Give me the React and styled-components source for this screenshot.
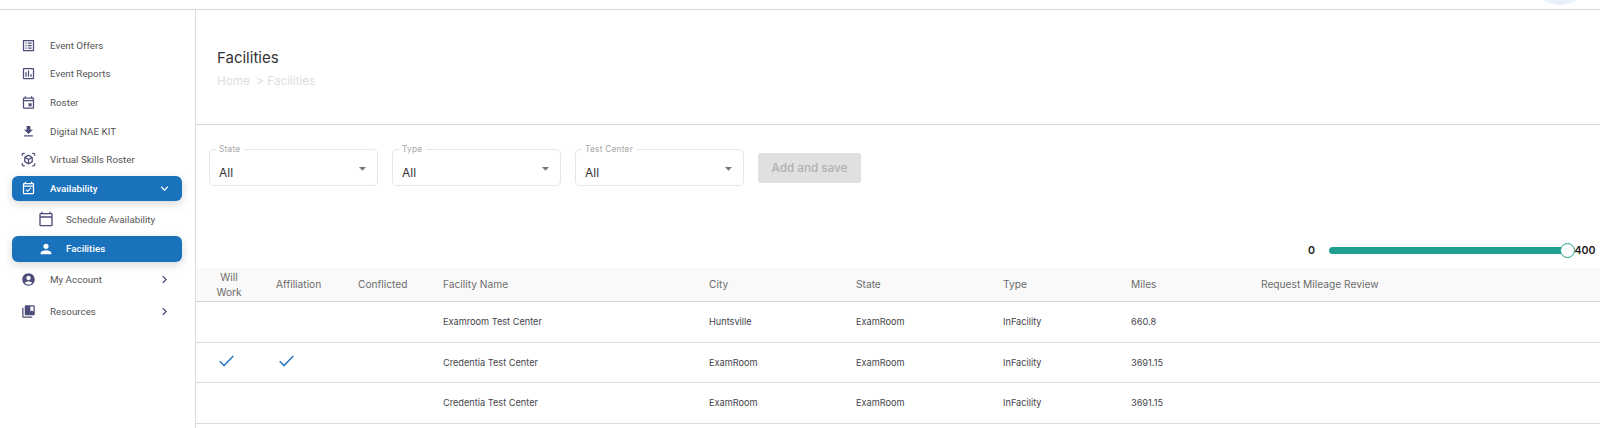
import React from "react";
import styled, { createGlobalStyle } from "styled-components";
import {
  MdOutlineListAlt,
  MdOutlineAssessment,
  MdOutlineEvent,
  MdFileDownload,
  MdOutlineViewInAr,
  MdOutlineEventAvailable,
  MdOutlineCalendarToday,
  MdPerson,
  MdAccountCircle,
  MdCollectionsBookmark,
  MdChevronRight,
  MdExpandMore,
  MdArrowDropDown,
} from "react-icons/md";

const GlobalStyle = createGlobalStyle`
  html, body {
    margin: 0;
    padding: 0;
    background: #fff;
    overflow: hidden;
  }
  * { box-sizing: border-box; }
`;

const Page = styled.div`
  width: 1600px;
  height: 428px;
  display: flex;
  flex-direction: column;
  overflow: hidden;
  font-family: Inter, "Liberation Sans", sans-serif;
`;

const TopBar = styled.header`
  flex: 0 0 10px;
  display: flex;
  justify-content: flex-end;
  overflow: hidden;
  border-bottom: 1px solid #d4d4d4;
  padding-right: 12px;
`;

const Avatar = styled.div`
  flex: none;
  width: 56px;
  height: 56px;
  margin-top: -51px;
  border-radius: 50%;
  background: #e8f1fa;
`;

const Body = styled.div`
  flex: 1;
  display: flex;
  min-height: 0;
`;

const Sidebar = styled.nav`
  flex: 0 0 196px;
  border-right: 1px solid #dcdcdc;
  padding: 21px 13px 0 12px;
`;

const NavItem = styled.div`
  height: ${(p) => p.$h || 28.6}px;
  display: flex;
  align-items: center;
  padding-left: ${(p) => (p.$sub ? 26 : 9)}px;
  padding-right: 10.5px;
  border-radius: 6px;
  font-family: Roboto, sans-serif;
  font-size: 9.8px;
  font-weight: ${(p) => (p.$active ? 500 : 400)};
  color: ${(p) => (p.$active ? "#fff" : "#555")};
  background: ${(p) => (p.$active ? "#1b72bc" : "transparent")};
  box-shadow: ${(p) =>
    p.$active ? "0 3px 10px rgba(0,0,0,0.16)" : "none"};

  > svg:first-child {
    flex: none;
    font-size: ${(p) => (p.$sub ? 16 : 15)}px;
    color: ${(p) => (p.$active ? "#fff" : "#4d4d7a")};
    margin-right: ${(p) => (p.$sub ? 12 : 14)}px;
  }
`;

const NavLabel = styled.span`
  flex: 1;
  white-space: nowrap;
`;

const NavCaret = styled.span`
  display: flex;
  font-size: 15px;
  color: ${(p) => (p.$active ? "#fff" : "#4d4d7a")};
`;

const NavGroup = styled.div`
  margin-top: ${(p) => p.$mt || 0}px;
`;

const SubList = styled.div`
  margin-top: 6px;
  display: flex;
  flex-direction: column;
  gap: 4px;
`;

const Main = styled.main`
  flex: 1;
  min-width: 0;
  display: flex;
  flex-direction: column;
`;

const PageHead = styled.div`
  height: 115px;
  border-bottom: 1px solid #d9d5d5;
  padding: 39px 0 0 21px;
`;

const Title = styled.h1`
  margin: 0;
  font-size: 15px;
  line-height: 18px;
  font-weight: 400;
  color: #333;
`;

const Crumbs = styled.div`
  margin-top: 7px;
  font-size: 11.7px;
  line-height: 15px;
  color: #dedede;
  white-space: pre;
`;

const Filters = styled.div`
  display: flex;
  align-items: flex-start;
  padding: 19px 0 0 13px;
  gap: 14px;
  height: 113px;
`;

const Select = styled.fieldset`
  margin: 0;
  width: 169px;
  height: 41.5px;
  padding: 0 6.5px 0 9px;
  border: 1px solid #e6e6e6;
  border-radius: 5px;
  display: flex;
  align-items: flex-start;
  justify-content: space-between;
`;

const SelectLabel = styled.legend`
  margin-left: -3px;
  padding: 0 4px 0 3px;
  font-size: 8.4px;
  line-height: 10px;
  letter-spacing: 0.2px;
  color: #a8a8a8;
`;

const SelectValue = styled.span`
  margin-top: 11px;
  font-size: 12px;
  line-height: 15px;
  color: #333;
`;

const SelectCaret = styled(MdArrowDropDown)`
  margin-top: 6px;
  font-size: 17px;
  color: #777;
`;

const AddButton = styled.button`
  width: 103px;
  height: 30px;
  margin-top: 9px;
  border: none;
  border-radius: 3px;
  background: #e0e0e0;
  color: #b0b0b0;
  font-family: inherit;
  font-size: 11.7px;
  font-weight: 500;
`;

const SliderRow = styled.div`
  height: 24px;
  display: flex;
  align-items: center;
  padding-left: 1112px;
  font-size: 10.6px;
  font-weight: 600;
  color: #222;
`;

const SliderMin = styled.span`
  width: 20.5px;
`;

const SliderTrack = styled.div`
  width: 238px;
  height: 7px;
  border-radius: 4px;
  background: #1fa08e;
`;

const SliderThumb = styled.div`
  flex: none;
  width: 15px;
  height: 15px;
  margin: 0 0 0 -7px;
  border-radius: 50%;
  border: 1.5px solid #1fa08e;
  background: #fff;
`;

const Table = styled.table`
  width: 100%;
  margin-top: 6px;
  border-collapse: collapse;
  table-layout: fixed;
`;

const HeadRow = styled.tr`
  height: 33.5px;
  background: #f9f9f9;
`;

const Th = styled.th`
  padding: 0 ${(p) => (p.$center ? 9 : 0)}px 0 ${(p) => p.$pad ?? 0}px;
  text-align: ${(p) => (p.$center ? "center" : "left")};
  font-size: 10.2px;
  line-height: 15px;
  font-weight: 400;
  color: #6c6c6c;
  border-bottom: 1px solid #d2d2d2;
`;

const Tr = styled.tr`
  height: 40.5px;
`;

const Td = styled.td`
  padding: 0;
  font-size: 9.2px;
  color: #44444c;
  border-bottom: 1px solid #dcdcdc;
  white-space: nowrap;
`;

const CheckCell = styled(Td)`
  padding-left: ${(p) => p.$pad}px;
  padding-bottom: 2px;
  color: #2f7bc4;
  line-height: 0;
`;

const CheckMark = ({ on }) =>
  on ? (
    <svg width="15" height="12" viewBox="0 0 15 12" fill="none">
      <path d="M0.7 6.3 L5 10.6 L14.3 1" stroke="currentColor" strokeWidth="1.6" />
    </svg>
  ) : null;

const columns = [
  { label: "Will Work", width: 75, center: true },
  { label: "Affiliation", width: 82, pad: 5 },
  { label: "Conflicted", width: 90, pad: 5 },
  { label: "Facility Name", width: 266 },
  { label: "City", width: 147 },
  { label: "State", width: 147 },
  { label: "Type", width: 128 },
  { label: "Miles", width: 130 },
  { label: "Request Mileage Review" },
];

const rows = [
  { name: "Examroom Test Center", city: "Huntsville", state: "ExamRoom", type: "InFacility", miles: "660.8" },
  { name: "Credentia Test Center", city: "ExamRoom", state: "ExamRoom", type: "InFacility", miles: "3691.15", checked: true },
  { name: "Credentia Test Center", city: "ExamRoom", state: "ExamRoom", type: "InFacility", miles: "3691.15" },
];

export default function App() {
  return (
    <Page>
      <GlobalStyle />
      <TopBar>
        <Avatar />
      </TopBar>
      <Body>
        <Sidebar>
          <NavItem><MdOutlineListAlt /><NavLabel>Event Offers</NavLabel></NavItem>
          <NavItem><MdOutlineAssessment /><NavLabel>Event Reports</NavLabel></NavItem>
          <NavItem><MdOutlineEvent /><NavLabel>Roster</NavLabel></NavItem>
          <NavItem><MdFileDownload /><NavLabel>Digital NAE KIT</NavLabel></NavItem>
          <NavItem><MdOutlineViewInAr /><NavLabel>Virtual Skills Roster</NavLabel></NavItem>
          <NavGroup $mt={2}>
            <NavItem $active $h={25}>
              <MdOutlineEventAvailable />
              <NavLabel>Availability</NavLabel>
              <NavCaret $active><MdExpandMore /></NavCaret>
            </NavItem>
            <SubList>
              <NavItem $sub $h={25}><MdOutlineCalendarToday /><NavLabel>Schedule Availability</NavLabel></NavItem>
              <NavItem $sub $active $h={26}><MdPerson /><NavLabel>Facilities</NavLabel></NavItem>
            </SubList>
          </NavGroup>
          <NavGroup $mt={2}>
            <NavItem $h={32}>
              <MdAccountCircle />
              <NavLabel>My Account</NavLabel>
              <NavCaret><MdChevronRight /></NavCaret>
            </NavItem>
            <NavItem $h={32}>
              <MdCollectionsBookmark />
              <NavLabel>Resources</NavLabel>
              <NavCaret><MdChevronRight /></NavCaret>
            </NavItem>
          </NavGroup>
        </Sidebar>
        <Main>
          <PageHead>
            <Title>Facilities</Title>
            <Crumbs>{"Home  > Facilities"}</Crumbs>
          </PageHead>
          <Filters>
            {["State", "Type", "Test Center"].map((label) => (
              <Select key={label}>
                <SelectLabel>{label}</SelectLabel>
                <SelectValue>All</SelectValue>
                <SelectCaret />
              </Select>
            ))}
            <AddButton>Add and save</AddButton>
          </Filters>
          <SliderRow>
            <SliderMin>0</SliderMin>
            <SliderTrack />
            <SliderThumb />
            <span>400</span>
          </SliderRow>
          <Table>
            <colgroup>
              {columns.map((c) => (
                <col key={c.label} style={c.width ? { width: c.width } : undefined} />
              ))}
            </colgroup>
            <thead>
              <HeadRow>
                {columns.map((c) => (
                  <Th key={c.label} $center={c.center} $pad={c.pad}>
                    {c.label === "Will Work" ? <>Will<br />Work</> : c.label}
                  </Th>
                ))}
              </HeadRow>
            </thead>
            <tbody>
              {rows.map((r, i) => (
                <Tr key={i}>
                  <CheckCell $pad={23}><CheckMark on={r.checked} /></CheckCell>
                  <CheckCell $pad={8}><CheckMark on={r.checked} /></CheckCell>
                  <Td />
                  <Td>{r.name}</Td>
                  <Td>{r.city}</Td>
                  <Td>{r.state}</Td>
                  <Td>{r.type}</Td>
                  <Td>{r.miles}</Td>
                  <Td />
                </Tr>
              ))}
            </tbody>
          </Table>
        </Main>
      </Body>
    </Page>
  );
}
